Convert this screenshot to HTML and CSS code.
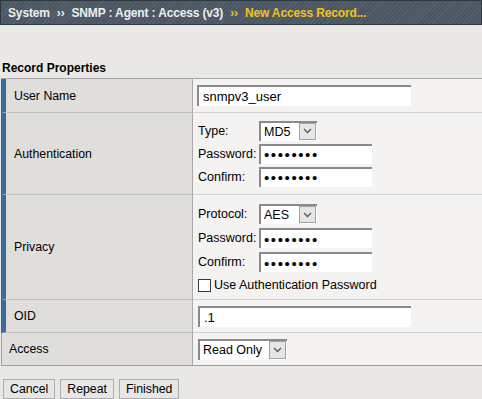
FILE: index.html
```html
<!DOCTYPE html>
<html>
<head>
<meta charset="utf-8">
<title>New Access Record</title>
<link rel="stylesheet" href="styles.css">
</head>
<body>
<div class="crumbs">
  <span class="crumb">System</span><span class="sep">&rsaquo;&rsaquo;</span><span class="crumb">SNMP : Agent : Access (v3)</span><span class="sep current">&rsaquo;&rsaquo;</span><span class="crumb current">New Access Record...</span>
</div>
<div class="section-title">Record Properties</div>
<div class="props">
  <div class="row req r-user">
    <div class="lbl">User Name</div>
    <div class="val"><input class="text long" type="text" value="snmpv3_user"></div>
  </div>
  <div class="row req r-auth">
    <div class="lbl">Authentication</div>
    <div class="val">
      <div class="fields">
        <label>Type:</label>
        <span class="sel sel-short"><select><option>MD5</option><option>SHA</option></select><span class="arrow"><svg width="9" height="6" viewBox="0 0 9 6"><polyline points="1,1 4.5,4.5 8,1" fill="none" stroke="#5a5a5a" stroke-width="1.4"/></svg></span></span>
        <label>Password:</label>
        <input class="text pw" type="password" value="password">
        <label>Confirm:</label>
        <input class="text pw" type="password" value="password">
      </div>
    </div>
  </div>
  <div class="row req r-priv">
    <div class="lbl">Privacy</div>
    <div class="val">
      <div class="fields loose">
        <label>Protocol:</label>
        <span class="sel sel-short"><select><option>AES</option><option>DES</option></select><span class="arrow"><svg width="9" height="6" viewBox="0 0 9 6"><polyline points="1,1 4.5,4.5 8,1" fill="none" stroke="#5a5a5a" stroke-width="1.4"/></svg></span></span>
        <label>Password:</label>
        <input class="text pw" type="password" value="password">
        <label>Confirm:</label>
        <input class="text pw" type="password" value="password">
        <label class="check"><input type="checkbox"><span>Use Authentication Password</span></label>
      </div>
    </div>
  </div>
  <div class="row req r-oid">
    <div class="lbl">OID</div>
    <div class="val"><input class="text long oid" type="text" value=".1"></div>
  </div>
  <div class="row r-access">
    <div class="lbl">Access</div>
    <div class="val"><span class="sel sel-access"><select><option>Read Only</option><option>Read/Write</option></select><span class="arrow"><svg width="9" height="6" viewBox="0 0 9 6"><polyline points="1,1 4.5,4.5 8,1" fill="none" stroke="#5a5a5a" stroke-width="1.4"/></svg></span></span></div>
  </div>
</div>
<div class="buttons">
  <button type="button">Cancel</button>
  <button type="button">Repeat</button>
  <button type="button">Finished</button>
</div>
</body>
</html>
```

FILE: styles.css
```css
* { box-sizing: border-box; }
body {
  margin: 0;
  background: #e9e8e4;
  font-family: "Liberation Sans", Arial, sans-serif;
  font-size: 12px;
  color: #000;
}
.crumbs {
  height: 25px;
  border: 1px solid #2f3741;
  background: #4b5663 repeating-linear-gradient(135deg, rgba(255,255,255,0.07) 0 1px, rgba(0,0,0,0) 1px 3px);
  display: flex;
  align-items: center;
  padding-left: 7px;
  font-weight: bold;
  color: #eeeeee;
  white-space: nowrap;
  letter-spacing: -0.15px;
}
.sep { margin: 0 7px; }
.current { color: #f4c21c; }
.section-title {
  font-weight: bold;
  line-height: 14px;
  padding: 36px 0 3px 2px;
}
.props {
  margin-left: 1px;
  border-top: 1px solid #a5a5a5;
  border-bottom: 1px solid #9c9c9c;
}
.row { display: flex; }
.lbl {
  width: 192px;
  flex: none;
  display: flex;
  align-items: center;
  background: #dfdedb;
  border-left: 1px solid #a0a0a0;
  border-right: 1px solid #a9a9a9;
  border-bottom: 1px solid #c2c2c2;
  padding-left: 7px;
  font-size: 12.3px;
}
.req .lbl {
  border-left: 5px solid #3b6a9c;
  padding-left: 8px;
}
.val {
  flex: 1;
  display: flex;
  align-items: center;
  background: #f4f3f1;
  border-bottom: 1px solid #d3d3d3;
  padding-left: 4px;
}
.r-access .lbl, .r-access .val { border-bottom: 0; }
.r-user { height: 34px; }
.r-auth { height: 82px; }
.r-priv { height: 105px; }
.r-oid { height: 33px; }
.r-access { height: 32px; }

.text {
  height: 21px;
  border: 0;
  border-top: 2px solid #8a8a8a;
  border-left: 2px solid #8a8a8a;
  background: #fff;
  font-family: "Liberation Sans", Arial, sans-serif;
  font-size: 13px;
  color: #000;
  padding: 0 4px;
  margin: 0;
  border-radius: 0;
  outline: none;
}
.long { width: 214px; }
.oid { margin-left: 1px; width: 213px; }
.pw {
  width: 113px;
  height: 20px;
  font-size: 15px;
  letter-spacing: 1.6px;
  padding-left: 3px;
}
.fields {
  display: grid;
  grid-template-columns: 61px auto;
  row-gap: 3px;
  align-items: center;
  padding-left: 1px;
  font-size: 12.5px;
}
.fields.loose { row-gap: 4px; padding-top: 2px; }
.fields label { white-space: nowrap; }
.fields .check {
  grid-column: 1 / 3;
  display: flex;
  align-items: center;
  gap: 3px;
  margin-top: 2px;
}
.check input {
  -webkit-appearance: none;
  appearance: none;
  width: 13px;
  height: 13px;
  margin: 0;
  border: 1px solid #3a3a3a;
  background: #fff;
}
.sel {
  position: relative;
  display: inline-block;
  width: 58px;
  height: 20px;
}
.sel-access { width: 89px; height: 21px; margin-left: 1px; }
.sel select {
  -webkit-appearance: none;
  appearance: none;
  width: 100%;
  height: 100%;
  border: 0;
  border-top: 2px solid #8a8a8a;
  border-left: 2px solid #8a8a8a;
  border-radius: 0;
  background: #fff;
  font-family: "Liberation Sans", Arial, sans-serif;
  font-size: 12.5px;
  color: #000;
  padding: 0 0 0 3px;
  margin: 0;
  outline: none;
}
.arrow {
  position: absolute;
  right: 1px;
  top: 2px;
  bottom: 1px;
  width: 17px;
  background: #e6e6e6;
  border: 1px solid #a3a3a3;
  display: flex;
  align-items: center;
  justify-content: center;
  pointer-events: none;
}
.buttons {
  display: flex;
  gap: 5px;
  padding: 13px 0 0 3px;
}
.buttons button {
  height: 20px;
  padding: 0 6px;
  margin: 0;
  border: 1px solid #adadad;
  background: #e6e6e6;
  font-family: "Liberation Sans", Arial, sans-serif;
  font-size: 12.3px;
  color: #000;
  border-radius: 0;
}
```
